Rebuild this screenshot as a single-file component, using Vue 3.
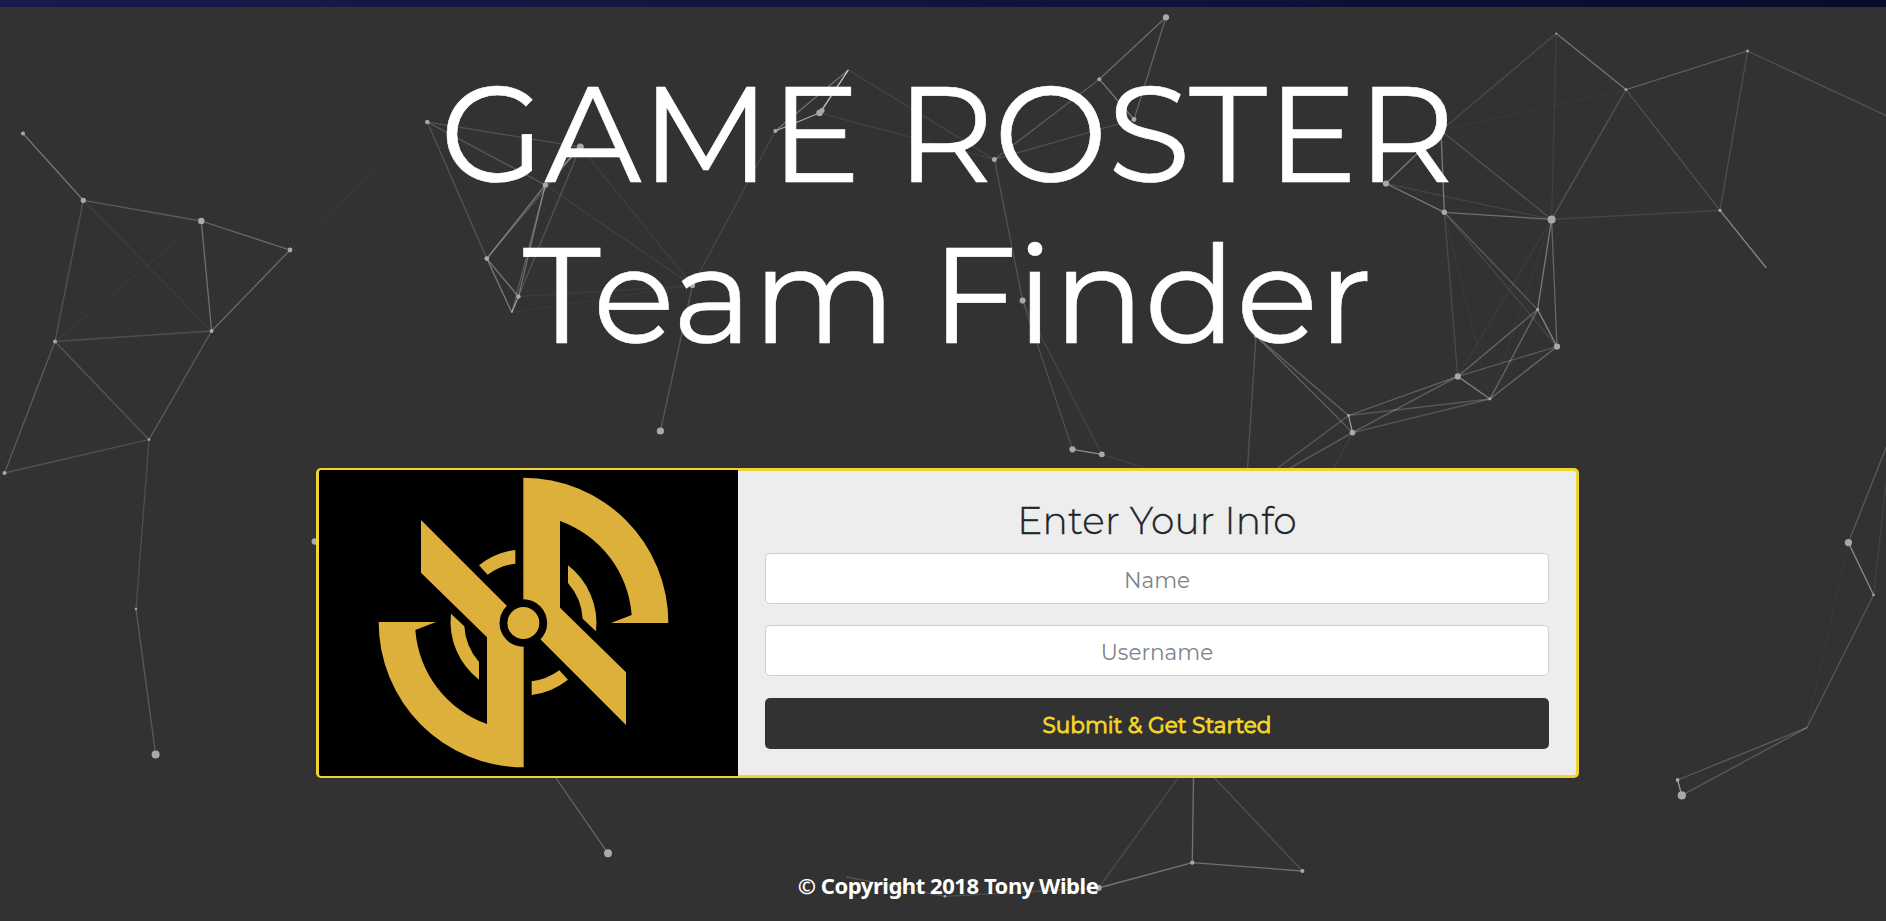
<script setup>
// Background network: id -> [x, y, radius]
const nodes = {
  a1: [23, 133.5, 2], a2: [83.3, 200.3, 2.6], a3: [201.3, 221, 3.2], a4: [290, 250, 2.4],
  a5: [211.6, 331, 2], a6: [55, 341.5, 2], a7: [149, 439.6, 1.3], a8: [4.5, 473, 2],
  a9: [136, 609, 1.2], a10: [155.6, 754.4, 4], a11: [314.8, 541.5, 3.2],
  b1: [427.3, 122, 2.2], b2: [580.3, 147, 3.5], b3: [545.3, 185, 2.6], b4: [486.8, 258.6, 2.4],
  b5: [518.5, 296.6, 2.2], b6: [511.8, 312.5, 0.4], b7: [692.5, 285.5, 2.6], b8: [660.4, 431, 3.6],
  b9: [775.3, 131, 2], b10: [819.5, 113, 3.2], b11: [848.3, 70, 0.4], b12: [822, 110.5, 2.6],
  c1: [994.4, 159.4, 2.5], c2: [1099.3, 79.2, 2], c3: [1166, 17.3, 3.1], c4: [1134, 119.5, 2.4],
  c5: [1022.6, 300.4, 3], c6: [1072.5, 449.3, 3.1], c7: [1101.8, 454.3, 2.9], c8: [1256, 336, 2],
  c9: [1348.5, 415.5, 1.4], c10: [1352.5, 432.6, 2.9], c11: [1386, 183.5, 3.1], c12: [1444.3, 212.3, 2.7],
  c13: [1457.8, 376.4, 3.1], d1: [1490, 399, 1.4], d2: [1557, 346.5, 3.1], d3: [1537.6, 309.6, 1.5],
  d4: [1551.6, 219.4, 4], d5: [1441, 130.5, 1], d6: [1556.3, 33.4, 1], d7: [1626, 89.6, 1.4],
  d8: [1747.6, 51, 1.4], d9: [1720, 210.3, 1.6], d10: [1766, 267.5, 0.4], d11: [1900, 122, 1],
  e1: [1193.8, 756, 2], e2: [1192.3, 862.6, 2.2], e3: [1302.4, 871, 2], e4: [1098.6, 888, 3],
  e5: [945, 896.3, 1.4], e6: [847, 877, 0.4], e7: [549, 768, 1], e8: [608, 853.3, 4],
  f1: [1893, 430, 1], f2: [1848.4, 542.6, 3.6], f3: [1873.6, 595, 1.3], f4: [1807, 727.6, 0.4],
  f5: [1677.6, 780, 1.9], f6: [1681.8, 795.4, 4.1],
  g1: [1170, 476, 0], g2: [1247, 476, 0], g3: [1267, 476, 0], g4: [1276, 476, 0], g5: [1328, 480, 0],
  g6: [1892, 430, 0],
}

// [from, to, opacity]
const links = [
  ['a1', 'a2', 0.32], ['a2', 'a3', 0.2], ['a3', 'a4', 0.28], ['a3', 'a5', 0.3], ['a4', 'a5', 0.28],
  ['a5', 'a6', 0.14], ['a2', 'a6', 0.16], ['a6', 'a7', 0.18], ['a5', 'a7', 0.2], ['a6', 'a8', 0.2],
  ['a7', 'a8', 0.15], ['a2', 'a5', 0.05], ['a3', 'a6', 0.03], ['a4', 'b1', 0.03], ['a4', 'b4', 0.02],
  ['a7', 'a9', 0.14], ['a9', 'a10', 0.2], ['a9', 'a11', 0.02], ['a8', 'a9', 0.015],
  ['b1', 'b2', 0.14], ['b1', 'b3', 0.2], ['b1', 'b4', 0.16], ['b3', 'b2', 0.4], ['b3', 'b4', 0.35],
  ['b3', 'b5', 0.3], ['b3', 'b6', 0.2], ['b4', 'b5', 0.35], ['b4', 'b6', 0.35], ['b2', 'b5', 0.16],
  ['b2', 'b4', 0.18], ['b5', 'b6', 0.5], ['b3', 'b7', 0.07], ['b2', 'b7', 0.06], ['b5', 'b7', 0.05],
  ['b6', 'b7', 0.03], ['b7', 'b9', 0.1], ['b7', 'b8', 0.18], ['b9', 'b10', 0.6], ['b9', 'b11', 0.3],
  ['b10', 'b11', 0.5], ['b12', 'b11', 0.45], ['b11', 'c1', 0.09], ['b10', 'c1', 0.07],
  ['c1', 'c2', 0.2], ['c1', 'c4', 0.15], ['c2', 'c3', 0.28], ['c2', 'c4', 0.35], ['c3', 'c4', 0.24],
  ['c1', 'c5', 0.16], ['c5', 'c6', 0.15], ['c5', 'c7', 0.09], ['c6', 'c7', 0.45], ['c7', 'g1', 0.08],
  ['c8', 'c9', 0.24], ['c8', 'c10', 0.22], ['c8', 'g2', 0.16], ['c9', 'c10', 0.5], ['c9', 'c13', 0.24],
  ['c10', 'c13', 0.22], ['c9', 'd1', 0.18], ['c10', 'd1', 0.18], ['c9', 'g3', 0.2], ['c10', 'g4', 0.22],
  ['c10', 'g5', 0.06], ['c11', 'd5', 0.35], ['c11', 'c12', 0.35], ['c12', 'd5', 0.35],
  ['c11', 'd4', 0.09], ['c12', 'd4', 0.3], ['c12', 'd3', 0.2], ['c12', 'd2', 0.1], ['c12', 'c13', 0.12],
  ['c12', 'd1', 0.03], ['d4', 'd3', 0.35], ['d4', 'd2', 0.26], ['d4', 'c13', 0.05], ['d4', 'd1', 0.03],
  ['d3', 'd2', 0.4], ['d3', 'c13', 0.26], ['d3', 'd1', 0.26], ['d2', 'c13', 0.2], ['d2', 'd1', 0.27],
  ['c13', 'd1', 0.38], ['d5', 'd6', 0.12], ['d5', 'd7', 0.03], ['d5', 'd4', 0.16], ['d6', 'd7', 0.32],
  ['d6', 'd4', 0.07], ['d7', 'd8', 0.22], ['d7', 'd4', 0.16], ['d7', 'd9', 0.15], ['d8', 'd9', 0.14],
  ['d4', 'd9', 0.1], ['d9', 'd10', 0.42], ['d8', 'd11', 0.16], ['d6', 'd8', 0.015],
  ['e1', 'e2', 0.32], ['e1', 'e4', 0.12], ['e1', 'e3', 0.15], ['e2', 'e4', 0.32], ['e2', 'e3', 0.3],
  ['e4', 'e5', 0.14], ['e5', 'e6', 0.16], ['e7', 'e8', 0.25],
  ['f1', 'f2', 0.2], ['f2', 'f3', 0.42], ['g6', 'f3', 0.08], ['f3', 'f4', 0.18], ['f2', 'f4', 0.03],
  ['f4', 'f5', 0.2], ['f4', 'f6', 0.2], ['f5', 'f6', 0.5],
]
</script>

<template>
  <div class="page">
    <svg class="network" width="1886" height="921" aria-hidden="true">
      <line
        v-for="([from, to, alpha], i) in links" :key="i"
        :x1="nodes[from][0]" :y1="nodes[from][1]" :x2="nodes[to][0]" :y2="nodes[to][1]"
        :stroke-opacity="alpha"
      />
      <circle v-for="(n, id) in nodes" :key="id" :cx="n[0]" :cy="n[1]" :r="n[2]" />
    </svg>

    <div class="topbar"></div>

    <header class="hero">
      <h1 class="title">GAME ROSTER<br />Team Finder</h1>
    </header>

    <main class="card">
      <div class="emblem">
        <svg width="419" height="306" viewBox="27 30 1257 918" fill="#ddb03c">
          <defs>
            <g id="half">
              <path d="M640 53A435 435 0 0 1 1075 489H903L965 465A325 325 0 0 0 750 183V443L948 637V795L640 487Z" />
              <path d="M507 316A219 219 0 0 1 616 270V311A178 178 0 0 0 533 344Z" />
              <path d="M774 316A219 219 0 0 1 858 514L818 476A178 178 0 0 0 774 369Z" />
            </g>
          </defs>
          <use href="#half" />
          <use href="#half" transform="rotate(180 640.500 487.500)" />
          <circle cx="640" cy="489" r="71.500" fill="#000" />
          <circle cx="640" cy="489" r="48" />
        </svg>
      </div>
      <form class="form" @submit.prevent>
        <h2 class="form-title">Enter Your Info</h2>
        <input class="field" type="text" placeholder="Name" />
        <input class="field" type="text" placeholder="Username" />
        <button class="submit" type="submit">Submit &amp; Get Started</button>
      </form>
    </main>

    <footer class="footer">© Copyright 2018 Tony Wible</footer>
  </div>
</template>

<style>
body {
  margin: 0;
  background: #323232;
}
</style>

<style scoped>
.page {
  position: relative;
  display: flex;
  flex-direction: column;
  align-items: center;
  width: 1886px;
  height: 921px;
  overflow: hidden;
  background: #323232;
  font-family: Montserrat, Inter, "Liberation Sans", sans-serif;
}
.network {
  position: absolute;
  inset: 0;
  stroke: #fff;
  stroke-width: 1.3;
}
.network circle {
  fill: #a9a9a9;
  stroke: none;
}
.topbar {
  position: relative;
  width: 100%;
  height: 7px;
  background: linear-gradient(90deg, #191a4a, #12123c 55%, #0a0a2c);
}
.hero {
  position: relative;
  padding: 46px 0 0 9px;
}
.title {
  margin: 0;
  height: 323px;
  line-height: 161px;
  text-align: center;
  white-space: nowrap;
  font-size: 135.2px;
  font-weight: 400;
  color: #fff;
  -webkit-text-stroke: 0.6px #fff;
}
.card {
  position: relative;
  box-sizing: border-box;
  display: flex;
  width: 1263px;
  height: 310px;
  margin: 92px 0 0 9px;
  border: 3px solid #f0d433;
  border-radius: 5px;
  background: #ededed;
}
.emblem {
  width: 419px;
  height: 306px;
  margin: -1px 0;
  background: #000;
  border-radius: 2px 0 0 2px;
}
.emblem svg {
  display: block;
}
.form {
  flex: 1;
  display: flex;
  flex-direction: column;
  padding: 26px 27px 0 27px;
}
.form-title {
  margin: 0 0 13px;
  height: 43px;
  line-height: 48px;
  text-align: center;
  font-size: 37.6px;
  font-weight: 300;
  letter-spacing: 0.15px;
  -webkit-text-stroke: 0.3px #212529;
  color: #212529;
}
.field {
  box-sizing: border-box;
  width: 100%;
  height: 51px;
  margin: 0 0 21px;
  padding: 2px 12px 0;
  border: 1px solid #ced0d2;
  border-radius: 5px;
  background: #fff;
  text-align: center;
  font-family: inherit;
  font-size: 21.6px;
  font-weight: 400;
}
.field::placeholder {
  color: #7d848a;
  opacity: 1;
}
.submit {
  width: 100%;
  height: 51px;
  margin-top: 1px;
  padding: 2px 0 0;
  border: 0;
  border-radius: 5px;
  background: #323232;
  color: #f4d626;
  font-family: inherit;
  font-size: 21.6px;
  font-weight: 400;
  -webkit-text-stroke: 0.9px #f4d626;
}
.footer {
  position: relative;
  margin: 91px 0 0 10px;
  line-height: 32px;
  font-family: "Segoe UI", "Noto Sans", sans-serif;
  font-size: 22px;
  font-weight: 700;
  letter-spacing: -0.45px;
  white-space: nowrap;
  color: #fff;
}
</style>
